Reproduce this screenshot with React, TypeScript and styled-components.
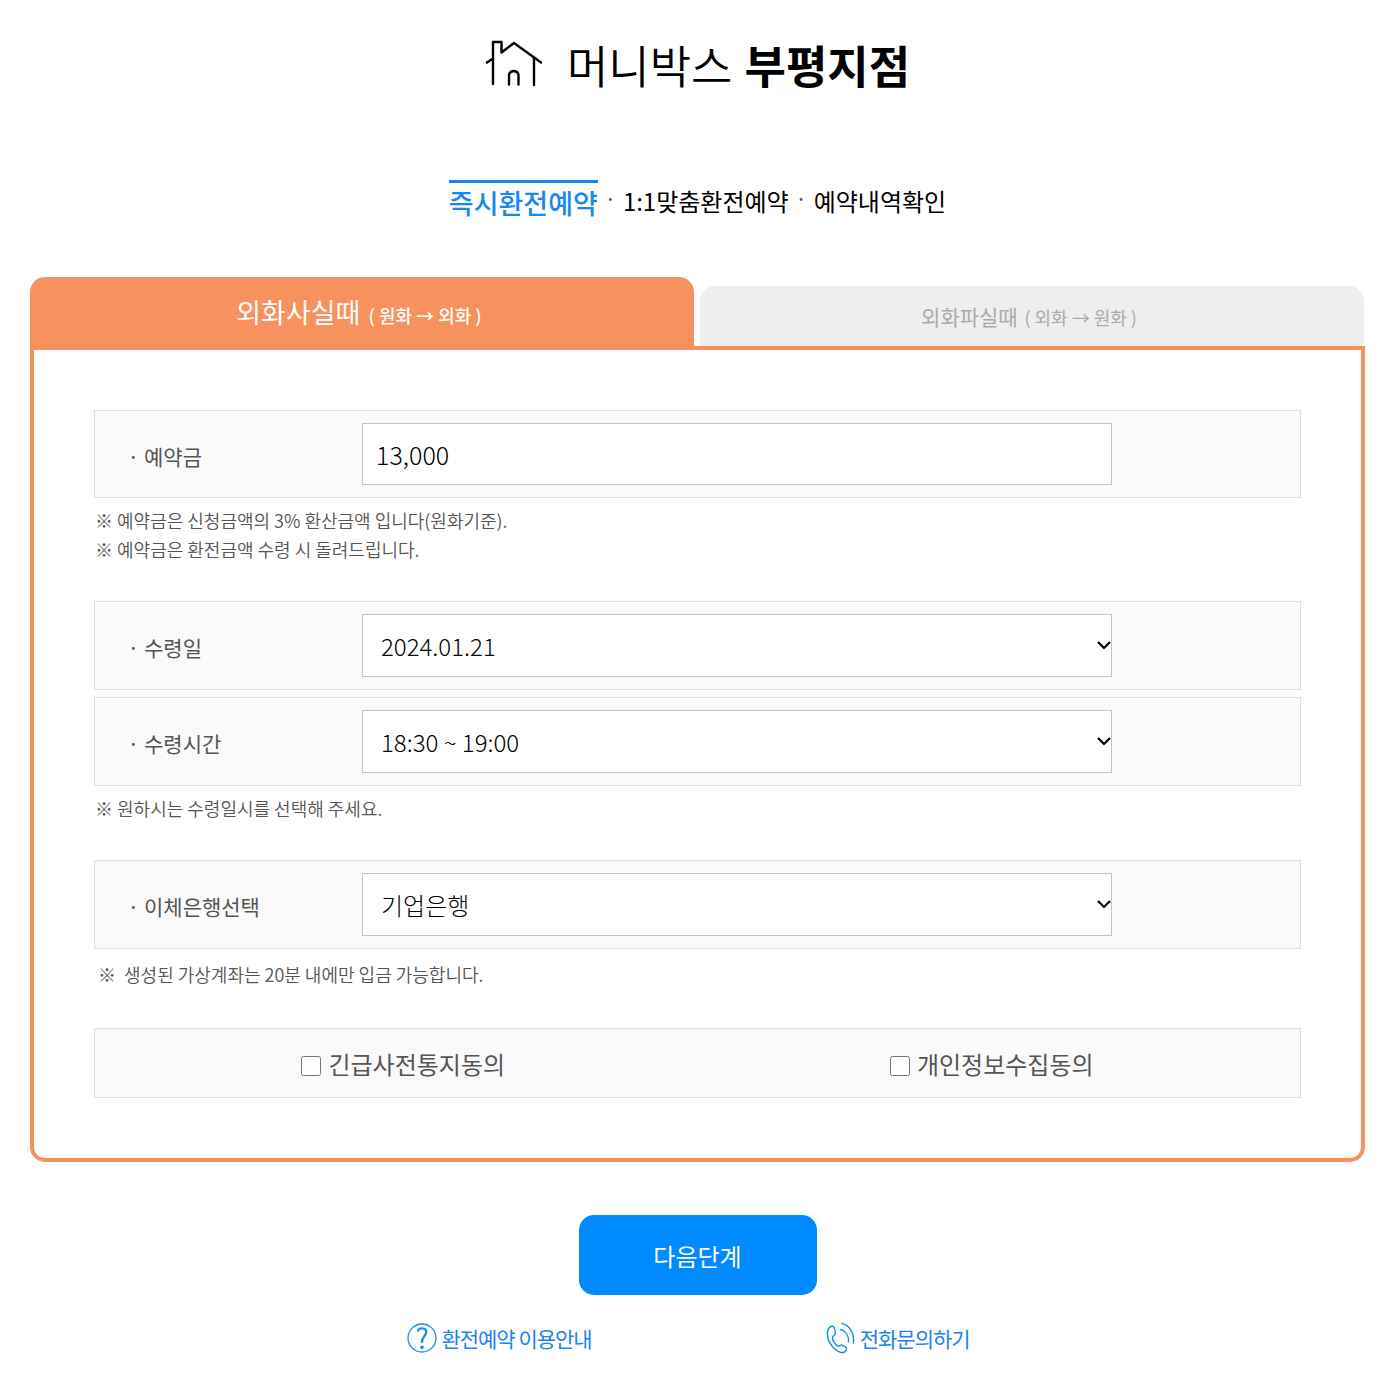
import React from 'react';
import styled, { createGlobalStyle } from 'styled-components';

const ORANGE = '#f7915d';

const GlobalStyle = createGlobalStyle`
  * { box-sizing: border-box; }
  body {
    margin: 0;
    background: #fff;
    color: #000;
    font-family: 'Noto Sans CJK KR', 'Noto Sans', sans-serif;
  }
  h1, p, ul, form { margin: 0; padding: 0; }
  ul { list-style: none; }
  button, input, select { font-family: inherit; }
  a { color: inherit; text-decoration: none; }
`;

const Page = styled.div`
  padding: 32px 15px 24px 30px;
`;

const Title = styled.h1`
  display: flex;
  justify-content: center;
  align-items: center;
  gap: 24px;
  font-size: 45px;
  line-height: 66px;
  font-weight: 350;

  svg { margin-bottom: 4px; }
  b {
    margin-left: 2px;
    font-weight: 700;
  }
`;

const Menu = styled.ul`
  display: flex;
  justify-content: center;
  margin-top: 82px;
  height: 97px;
  font-size: 24px;
  line-height: 42px;
`;

const MenuItem = styled.li`
  display: flex;

  & + &::before {
    content: '·';
    width: 25px;
    text-align: center;
    font-size: 21px;
    line-height: 36px;
    color: #555;
  }
`;

const MenuLink = styled.a<{ $active?: boolean }>`
  ${({ $active }) =>
    $active &&
    `
    border-top: 3px solid #1487ea;
    color: #1787f2;
    font-size: 27px;
    line-height: 40px;
    font-weight: 500;
  `}
`;

const Tabs = styled.div`
  display: grid;
  grid-template-columns: 1fr 1fr;
  column-gap: 6px;
  align-items: end;
  padding-right: 1px;
`;

const Tab = styled.button<{ $active?: boolean }>`
  height: ${({ $active }) => ($active ? 69 : 60)}px;
  padding: 0 6px 0 0;
  border: 0;
  border-radius: 15px 15px 0 0;
  background: ${({ $active }) => ($active ? ORANGE : '#eee')};
  color: ${({ $active }) => ($active ? '#fff' : '#aaa')};
  font-size: ${({ $active }) => ($active ? 27 : 21)}px;

  small {
    margin-left: 2px;
    font-size: 18px;
    font-weight: ${({ $active }) => ($active ? 500 : 400)};
  }
`;

const Panel = styled.div`
  padding: 60px;
  border: 4px solid ${ORANGE};
  border-radius: 0 0 15px 15px;
`;

const Group = styled.div`
  display: flex;
  flex-direction: column;
  gap: 7px;
  margin-bottom: 36px;
`;

const Row = styled.div`
  display: flex;
  align-items: center;
  padding: 12px 188px 12px 36px;
  border: 1px solid #ddd;
  background: #fafafa;
`;

const FieldLabel = styled.label`
  display: flex;
  flex: 0 0 231px;
  gap: 8px;
  padding-top: 3px;
  color: #555;
  font-size: 21px;
  line-height: 30px;

  &::before {
    content: '·';
    display: flex;
    justify-content: center;
    width: 5px;
  }
`;

const TextBox = styled.input`
  flex: 1;
  min-width: 0;
  height: 62px;
  padding: 0 13px;
  border: 1px solid #c4c4c4;
  border-radius: 0;
  background: #fff;
  color: #000;
  font-size: 25px;
  font-weight: 300;
`;

const SelectWrap = styled.div`
  position: relative;
  flex: 1;
  min-width: 0;

  svg {
    position: absolute;
    top: 26px;
    right: 0;
    pointer-events: none;
  }
`;

const SelectBox = styled.select`
  display: block;
  width: 100%;
  height: 63px;
  padding: 0 18px;
  appearance: none;
  border: 1px solid #c4c4c4;
  border-radius: 0;
  background: #fff;
  color: #000;
  font-size: 24px;
  font-weight: 300;
`;

const Notes = styled.div<{ $loose?: boolean }>`
  padding: ${({ $loose }) => ($loose ? '4px 4px 3px' : '1px')};
  color: #555;
  font-size: 18px;
  font-weight: 350;
  line-height: 29px;
`;

const Consent = styled.div`
  display: grid;
  grid-template-columns: 1fr 1fr;
  align-items: center;
  height: 70px;
  padding: 0 14px;
  border: 1px solid #ddd;
  background: #fafafa;
`;

const CheckLabel = styled.label`
  display: flex;
  justify-content: center;
  align-items: center;
  gap: 7px;
  padding-top: 2px;
  color: #555;
  font-size: 24px;
  line-height: 36px;

  input {
    width: 20px;
    height: 20px;
    margin: 4px 0 0;
  }
`;

const NextButton = styled.button`
  display: block;
  width: 238px;
  height: 80px;
  margin: 53px auto 0;
  padding: 0;
  border: 0;
  border-radius: 15px;
  background: #008aff;
  color: #fff;
  font-size: 24px;
`;

const Help = styled.nav`
  display: flex;
  justify-content: center;
  gap: 234px;
  margin-top: 27px;
  padding-right: 18px;
`;

const HelpLink = styled.a`
  display: flex;
  align-items: center;
  gap: 4px;
  color: #1b84ee;
  font-size: 21px;
  line-height: 30px;
  letter-spacing: -1px;
`;

function HouseIcon() {
  return (
    <svg width="58" height="48" viewBox="0 0 58 48" fill="none" stroke="#000" strokeWidth="2.4" strokeLinecap="round" strokeLinejoin="round" aria-hidden="true">
      <path d="M8 45V3h8.500v10.500L29 4l27 19.500" />
      <path d="M8 19.500l-6 4M49 19v27" />
      <path d="M24 45.500V35.500a5 5 0 0 1 9.500 0v10" />
    </svg>
  );
}

function ChevronIcon() {
  return (
    <svg width="16" height="11" viewBox="0 0 16 11" fill="none" stroke="#000" strokeWidth="2.200" aria-hidden="true">
      <path d="M2 2l6 6L14 2" />
    </svg>
  );
}

function QuestionIcon() {
  return (
    <svg width="30" height="30" viewBox="0 0 30 30" fill="none" stroke="#1391e8" aria-hidden="true">
      <circle cx="15" cy="15" r="14" strokeWidth="1.300" />
      <path d="M11 7.500c1.500-3 8.300-3 8.300 1.500 0 4-4.300 4.500-4.300 10" strokeWidth="2.300" strokeLinecap="round" />
      <circle cx="15" cy="24.300" r="1.800" fill="#1391e8" stroke="none" />
    </svg>
  );
}

function PhoneIcon() {
  return (
    <svg width="30" height="32" viewBox="0 0 30 32" fill="none" stroke="#1391e8" strokeWidth="1.400" strokeLinecap="round" strokeLinejoin="round" aria-hidden="true">
      <path d="M5 4.500C2.500 5.500 1.300 9 1.500 13c.5 7.500 6.500 15.500 13 17.300 3 .9 6.500-1 6-3.800-.2-1.200-3.500-3.300-5-3.500-1.700-.2-2.300 1.700-3.800 1C8.700 22.500 6.200 18 6.500 15.200c.2-1.400 2.700-1.700 2.800-3.200.1-2-.8-6-1.800-7.200-.6-.7-1.700-.6-2.500-.3z" />
      <path d="M16 1.500c7 1.500 12.500 9 11.500 19.500M14.500 7.500c5.500 1.500 8.500 6.500 8 12.500" />
    </svg>
  );
}

interface SelectRowProps {
  id: string;
  label: string;
  options: string[];
}

function SelectRow({ id, label, options }: SelectRowProps) {
  return (
    <Row>
      <FieldLabel htmlFor={id}>{label}</FieldLabel>
      <SelectWrap>
        <SelectBox id={id}>
          {options.map((option) => (
            <option key={option}>{option}</option>
          ))}
        </SelectBox>
        <ChevronIcon />
      </SelectWrap>
    </Row>
  );
}

export default function App() {
  return (
    <>
      <GlobalStyle />
      <Page>
        <Title>
          <HouseIcon />
          <span>머니박스 <b>부평지점</b></span>
        </Title>
        <nav>
          <Menu>
            <MenuItem><MenuLink href="#instant" $active>즉시환전예약</MenuLink></MenuItem>
            <MenuItem><MenuLink href="#custom">1:1맞춤환전예약</MenuLink></MenuItem>
            <MenuItem><MenuLink href="#history">예약내역확인</MenuLink></MenuItem>
          </Menu>
        </nav>
        <form onSubmit={(event) => event.preventDefault()}>
          <Tabs>
            <Tab type="button" $active>외화사실때 <small>( 원화 → 외화 )</small></Tab>
            <Tab type="button">외화파실때 <small>( 외화 → 원화 )</small></Tab>
          </Tabs>
          <Panel>
            <Group>
              <Row>
                <FieldLabel htmlFor="deposit">예약금</FieldLabel>
                <TextBox id="deposit" type="text" defaultValue="13,000" />
              </Row>
              <Notes>
                <p>※ 예약금은 신청금액의 3% 환산금액 입니다(원화기준).</p>
                <p>※ 예약금은 환전금액 수령 시 돌려드립니다.</p>
              </Notes>
            </Group>
            <Group>
              <SelectRow id="date" label="수령일" options={['2024.01.21']} />
              <SelectRow id="time" label="수령시간" options={['18:30 ~ 19:00']} />
              <Notes>
                <p>※ 원하시는 수령일시를 선택해 주세요.</p>
              </Notes>
            </Group>
            <Group>
              <SelectRow id="bank" label="이체은행선택" options={['기업은행']} />
              <Notes $loose>
                <p>※&nbsp; 생성된 가상계좌는 20분 내에만 입금 가능합니다.</p>
              </Notes>
            </Group>
            <Consent>
              <CheckLabel><input type="checkbox" />긴급사전통지동의</CheckLabel>
              <CheckLabel><input type="checkbox" />개인정보수집동의</CheckLabel>
            </Consent>
          </Panel>
          <NextButton type="submit">다음단계</NextButton>
        </form>
        <Help>
          <HelpLink href="#guide"><QuestionIcon />환전예약 이용안내</HelpLink>
          <HelpLink href="#call"><PhoneIcon />전화문의하기</HelpLink>
        </Help>
      </Page>
    </>
  );
}
